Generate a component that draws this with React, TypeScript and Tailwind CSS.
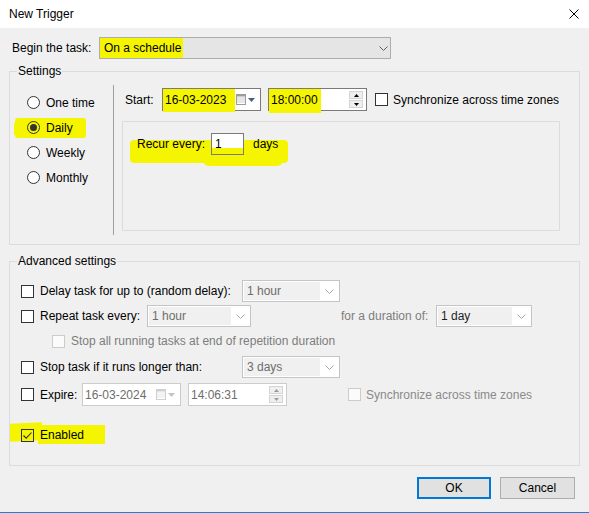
import React from "react";

const YEL = "bg-[#f5f500]";

function Chevron({ color = "#606060" }: { color?: string }) {
  return (
    <svg width="9" height="5" viewBox="0 0 9 5" fill="none">
      <path d="M0.5 0.5L4.5 4.5L8.5 0.5" stroke={color} strokeWidth="1" />
    </svg>
  );
}

function Check({ checked = false, disabled = false, clear = false }: { checked?: boolean; disabled?: boolean; clear?: boolean }) {
  const look = disabled ? "border-[#cccccc] bg-[#fbfbfb]" : clear ? "border-[#333333] bg-transparent" : "border-[#333333] bg-white";
  return (
    <span className={`relative flex h-[13px] w-[13px] shrink-0 items-center justify-center border ${look}`}>
      {checked && (
        <svg width="11" height="11" viewBox="0 0 11 11" fill="none">
          <path d="M1.5 5.5L4.2 8.2L9.5 2.5" stroke="#333333" strokeWidth="1.1" />
        </svg>
      )}
    </span>
  );
}

function Radio({ checked = false, clear = false }: { checked?: boolean; clear?: boolean }) {
  return (
    <span className={`flex h-[13px] w-[13px] shrink-0 items-center justify-center rounded-full border border-[#333333] ${clear ? "bg-transparent" : "bg-white"}`}>
      {checked && <span className="h-[7px] w-[7px] rounded-full bg-[#333333]" />}
    </span>
  );
}

function Combo({ value, w, dark = false }: { value: string; w: string; dark?: boolean }) {
  return (
    <div className={`flex h-[22px] shrink-0 items-stretch border border-[#c4c4c4] bg-white p-px ${w}`}>
      <span className={`flex flex-1 items-center bg-[#f0f0f0] pl-[3px] ${dark ? "text-[#1e1e1e]" : "text-[#6d6d6d]"}`}>{value}</span>
      <span className="flex w-[18px] items-center justify-center">
        <Chevron color="#a8a8a8" />
      </span>
    </div>
  );
}

function CalendarIcon({ faded = false }: { faded?: boolean }) {
  const c = faded ? "#cfcfcf" : "#9c9c9c";
  const cells = [];
  for (const y of [3.5, 5.5, 7.5]) for (const x of [1.5, 3.5, 5.5, 7.5]) cells.push(<rect key={`${x}-${y}`} x={x} y={y} width="1" height="1" fill={c} />);
  return (
    <svg width="10" height="11" viewBox="0 0 10 11">
      <rect x="0.5" y="0.5" width="9" height="10" fill="#ffffff" stroke={c} />
      <rect x="0" y="0" width="10" height="2.5" fill={c} />
      {cells}
    </svg>
  );
}

function DateBox({ value, disabled = false, hl = false }: { value: string; disabled?: boolean; hl?: boolean }) {
  return (
    <div className={`relative flex h-[23px] w-[99px] shrink-0 items-center border bg-white ${disabled ? "border-[#cccccc] text-[#6d6d6d]" : "border-[#7a7a7a]"}`}>
      {hl && <span className={`absolute left-0 top-0 h-[23px] w-[72px] ${YEL}`} />}
      <span className="relative flex-1 pl-[2px]">{value}</span>
      <span className="relative mr-[5px] flex items-center gap-[2px]">
        <CalendarIcon faded={disabled} />
        <svg width="7" height="4" viewBox="0 0 7 4">
          <path d="M0 0H7L3.5 4Z" fill={disabled ? "#c4c4c4" : "#4a5f85"} />
        </svg>
      </span>
    </div>
  );
}

function Spinner({ faded = false }: { faded?: boolean }) {
  const a = faded ? "#9a9a9a" : "#000000";
  return (
    <div className="flex flex-col gap-px">
      <span className="flex h-[8px] w-[14px] items-center justify-center border border-[#d4d4d4] bg-[#efefef]">
        <svg width="5" height="3" viewBox="0 0 5 3">
          <path d="M0 3L2.5 0L5 3Z" fill={a} />
        </svg>
      </span>
      <span className="flex h-[8px] w-[14px] items-center justify-center border border-[#d4d4d4] bg-[#efefef]">
        <svg width="5" height="3" viewBox="0 0 5 3">
          <path d="M0 0H5L2.5 3Z" fill={a} />
        </svg>
      </span>
    </div>
  );
}

function TimeBox({ value, disabled = false, hl = false }: { value: string; disabled?: boolean; hl?: boolean }) {
  return (
    <div className={`relative flex h-[23px] w-[99px] shrink-0 items-center border bg-white ${disabled ? "border-[#cccccc] text-[#6d6d6d]" : "border-[#7a7a7a]"}`}>
      {hl && <span className={`absolute left-0 top-0 h-[24px] w-[52px] ${YEL}`} />}
      <span className="relative flex-1 pl-[2px]">{value}</span>
      <span className="relative mr-[3px]">
        <Spinner faded={disabled} />
      </span>
    </div>
  );
}

export default function App() {
  return (
    <div className="flex h-[513px] w-[589px] flex-col overflow-hidden font-['Liberation_Sans',Arial,sans-serif] text-[12px] leading-[16px] text-black">
      {/* title bar */}
      <div className="flex h-[28px] shrink-0 items-center justify-between bg-white pl-[9px] pr-[10px]">
        <span>New Trigger</span>
        <svg width="10" height="10" viewBox="0 0 10 10" fill="none">
          <path d="M0.5 0.5L9.5 9.5M9.5 0.5L0.5 9.5" stroke="#000000" strokeWidth="1" />
        </svg>
      </div>

      <div className="flex flex-1 flex-col bg-[#f0f0f0] px-[9px]">
        {/* begin the task */}
        <div className="mt-[9px] flex h-[22px] items-center">
          <span className="w-[90px] shrink-0 pl-[3px]">Begin the task:</span>
          <div className="relative flex h-[22px] w-[292px] items-center border border-[#adadad] bg-[#e5e5e5]">
            <span className={`absolute left-0 top-0 h-full w-[83px] ${YEL}`} />
            <span className="relative pl-[4px]">On a schedule</span>
            <span className="relative ml-auto mr-[2px] flex">
              <Chevron />
            </span>
          </div>
        </div>

        {/* settings */}
        <fieldset className="mt-[4px] border border-[#dcdcdc] p-0">
          <legend className="ml-[7px] px-[1px] leading-[16px]">Settings</legend>
          <div className="flex">
            <div className="flex w-[103px] shrink-0 flex-col pt-[11px]">
              <div className="flex h-[25px] items-center gap-[6px] pl-[17px]">
                <Radio />
                <span>One time</span>
              </div>
              <div className="relative flex h-[25px] items-center gap-[6px] pl-[17px]">
                <span className={`absolute left-[5px] top-[3px] h-[20px] w-[71px] rounded-[3px] ${YEL}`} />
                <span className={`absolute left-[4px] top-[8px] h-[12px] w-[10px] ${YEL}`} />
                <span className="relative">
                  <Radio checked clear />
                </span>
                <span className="relative">Daily</span>
              </div>
              <div className="flex h-[25px] items-center gap-[6px] pl-[17px]">
                <Radio />
                <span>Weekly</span>
              </div>
              <div className="flex h-[25px] items-center gap-[6px] pl-[17px]">
                <Radio />
                <span>Monthly</span>
              </div>
            </div>

            <div className="mb-[9px] mt-[6px] w-px shrink-0 bg-[#a0a0a0]" />

            <div className="flex flex-col pb-[13px] pl-[8px] pt-[9px]">
              <div className="flex h-[23px] items-center pl-[3px]">
                <span className="w-[37px] shrink-0">Start:</span>
                <DateBox value="16-03-2023" hl />
                <span className="ml-[7px]">
                  <TimeBox value="18:00:00" hl />
                </span>
                <span className="ml-[8px]">
                  <Check />
                </span>
                <span className="ml-[5px] whitespace-nowrap">Synchronize across time zones</span>
              </div>

              <div className="relative mt-[10px] h-[110px] w-[438px] border border-[#dcdcdc] pl-[14px] pt-[11px]">
                <span className={`absolute left-[7px] top-[18px] h-[23px] w-[158px] rounded-[4px] ${YEL}`} />
                <span className={`absolute left-[80px] top-[24px] h-[20px] w-[80px] rounded-[6px] ${YEL}`} />
                <div className="relative flex h-[22px] items-center">
                  <span className="w-[74px] shrink-0">Recur every:</span>
                  <span className="flex h-[22px] w-[33px] items-start border border-[#7a7a7a] bg-[linear-gradient(to_bottom,#ffffff_0,#ffffff_70%,#f5f500_70%)] pl-[3px] pt-[2px]">
                    1
                  </span>
                  <span className="ml-[9px]">days</span>
                </div>
              </div>
            </div>
          </div>
        </fieldset>

        {/* advanced settings */}
        <fieldset className="mt-[8px] border border-[#dcdcdc] p-0">
          <legend className="ml-[7px] px-[1px] leading-[16px]">Advanced settings</legend>
          <div className="flex flex-col pb-[19px] pt-[11px]">
            <div className="flex h-[22px] items-center pl-[11px]">
              <Check />
              <span className="ml-[6px] w-[202px] shrink-0">Delay task for up to (random delay):</span>
              <Combo value="1 hour" w="w-[98px]" />
            </div>

            <div className="mt-[3px] flex h-[22px] items-center pl-[11px]">
              <Check />
              <span className="ml-[6px] w-[107px] shrink-0">Repeat task every:</span>
              <Combo value="1 hour" w="w-[104px]" />
              <span className="ml-[90px] w-[95px] shrink-0 text-[#7d7d7d]">for a duration of:</span>
              <Combo value="1 day" w="w-[96px]" dark />
            </div>

            <div className="mt-[3px] flex h-[22px] items-center pl-[42px]">
              <Check disabled />
              <span className="ml-[6px] text-[#7d7d7d]">Stop all running tasks at end of repetition duration</span>
            </div>

            <div className="mt-[4px] flex h-[22px] items-center pl-[11px]">
              <Check />
              <span className="ml-[6px] w-[202px] shrink-0">Stop task if it runs longer than:</span>
              <Combo value="3 days" w="w-[98px]" />
            </div>

            <div className="mt-[5px] flex h-[23px] items-center pl-[11px]">
              <Check />
              <span className="ml-[6px] w-[42px] shrink-0">Expire:</span>
              <DateBox value="16-03-2024" disabled />
              <span className="ml-[7px]">
                <TimeBox value="14:06:31" disabled />
              </span>
              <span className="ml-[61px]">
                <Check disabled />
              </span>
              <span className="ml-[5px] whitespace-nowrap text-[#8a8a8a]">Synchronize across time zones</span>
            </div>

            <div className="relative mt-[18px] flex h-[22px] items-center pl-[11px]">
              <span className={`absolute left-0 top-[-1px] h-[18px] w-[32px] -skew-y-3 ${YEL}`} />
              <span className={`absolute left-[28px] top-[1px] h-[19px] w-[67px] ${YEL}`} />
              <span className="relative">
                <Check checked clear />
              </span>
              <span className="relative ml-[6px]">Enabled</span>
            </div>
          </div>
        </fieldset>

        {/* buttons */}
        <div className="mr-[5px] mt-[11px] flex justify-end gap-[9px]">
          <button className="flex h-[22px] w-[74px] items-center justify-center border-2 border-[#0078d7] bg-[#e1e1e1]">OK</button>
          <button className="flex h-[22px] w-[75px] items-center justify-center border border-[#adadad] bg-[#e1e1e1]">Cancel</button>
        </div>
      </div>

      <div className="h-px shrink-0 bg-[#1883d7]" />
    </div>
  );
}
